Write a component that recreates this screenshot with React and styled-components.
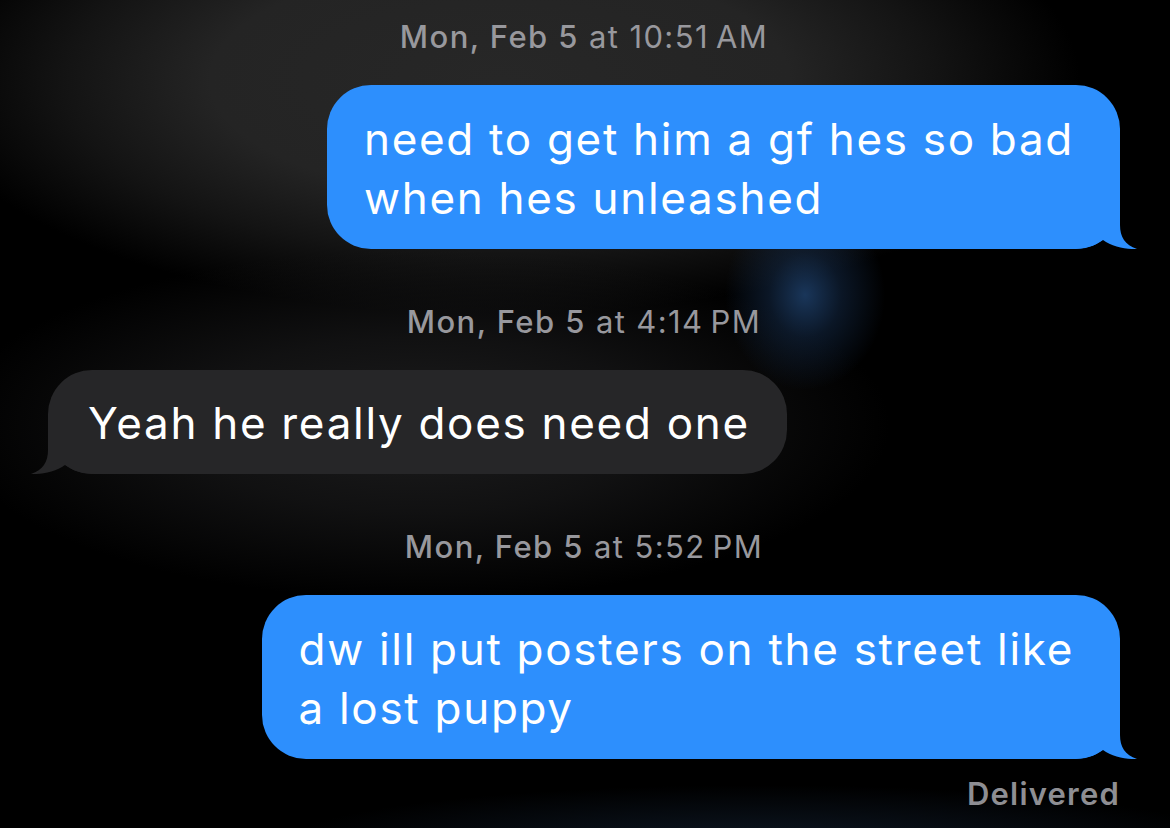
import styled, { createGlobalStyle } from "styled-components";

const GlobalStyle = createGlobalStyle`
  html, body {
    margin: 0;
    padding: 0;
    background: #000;
  }
  body {
    font-family: Inter, "Noto Sans", "Liberation Sans", sans-serif;
    -webkit-font-smoothing: antialiased;
  }
`;

const Screen = styled.div`
  width: 1170px;
  height: 828px;
  overflow: hidden;
  box-sizing: border-box;
  padding: 19px 50px 0 48px;
  display: flex;
  flex-direction: column;
  background-color: #000;
  background-image:
    radial-gradient(ellipse 80px 95px at 805px 295px, rgba(34, 72, 120, 0.75) 0%, rgba(24, 50, 85, 0.45) 45%, rgba(0, 0, 0, 0) 100%),
    radial-gradient(ellipse 480px 60px at 760px 845px, rgba(30, 52, 80, 0.45) 0%, rgba(0, 0, 0, 0) 100%),
    radial-gradient(ellipse 470px 175px at 420px 425px, rgba(30, 30, 31, 0.95) 0%, rgba(24, 24, 25, 0.7) 50%, rgba(0, 0, 0, 0) 100%),
    radial-gradient(ellipse 580px 235px at 500px 80px, #272727 0%, #242424 50%, rgba(26, 26, 26, 0.75) 75%, rgba(0, 0, 0, 0) 100%);
`;

const Stamp = styled.div`
  text-align: center;
  font-size: 31px;
  line-height: 36px;
  letter-spacing: 1.4px;
  color: #98989d;
  margin-top: ${(p) => p.$gap || 0}px;

  b {
    font-weight: 500;
  }
`;

const Row = styled.div`
  display: flex;
  justify-content: ${(p) => (p.$sent ? "flex-end" : "flex-start")};
  margin-top: 30px;
`;

const Bubble = styled.div`
  position: relative;
  box-sizing: border-box;
  padding: ${(p) => (p.$sent ? "25px 46px 21px 37px" : "24px 37px 21px 40px")};
  border-radius: 44px;
  background: ${(p) => (p.$sent ? "#2d8ffd" : "#262628")};
  color: #fff;
  font-size: 44px;
  line-height: 59px;
  letter-spacing: 1.7px;
  white-space: nowrap;
`;

const Tail = styled.svg`
  position: absolute;
  bottom: 0;
  width: 66px;
  height: 46px;
  ${(p) =>
    p.$sent
      ? "right: -18px;"
      : "left: -18px; transform: scaleX(-1);"}
`;

const Delivered = styled.div`
  align-self: flex-end;
  margin-top: 17px;
  font-size: 31px;
  line-height: 36px;
  font-weight: 600;
  letter-spacing: 1.2px;
  color: #8e8e93;
`;

function Message({ sent, children }) {
  const fill = sent ? "#2d8ffd" : "#262628";
  return (
    <Row $sent={sent}>
      <Bubble $sent={sent}>
        {children}
        <Tail $sent={sent} viewBox="0 0 66 46">
          <path
            d="M0 46 L0 0 L48 0 L48 22 C48 34 53 42 65 46 C55 46.5 40 44 31 37 C23 43 12 46 0 46 Z"
            fill={fill}
          />
        </Tail>
      </Bubble>
    </Row>
  );
}

export default function App() {
  return (
    <>
      <GlobalStyle />
      <Screen>
        <Stamp>
          <b>Mon, Feb 5</b> at 10:51&#8201;AM
        </Stamp>
        <Message sent>
          need to get him a gf hes so bad
          <br />
          when hes unleashed
        </Message>

        <Stamp $gap={55}>
          <b>Mon, Feb 5</b> at 4:14&#8201;PM
        </Stamp>
        <Message>Yeah he really does need one</Message>

        <Stamp $gap={55}>
          <b>Mon, Feb 5</b> at 5:52&#8201;PM
        </Stamp>
        <Message sent>
          dw ill put posters on the street like
          <br />a lost puppy
        </Message>

        <Delivered>Delivered</Delivered>
      </Screen>
    </>
  );
}
